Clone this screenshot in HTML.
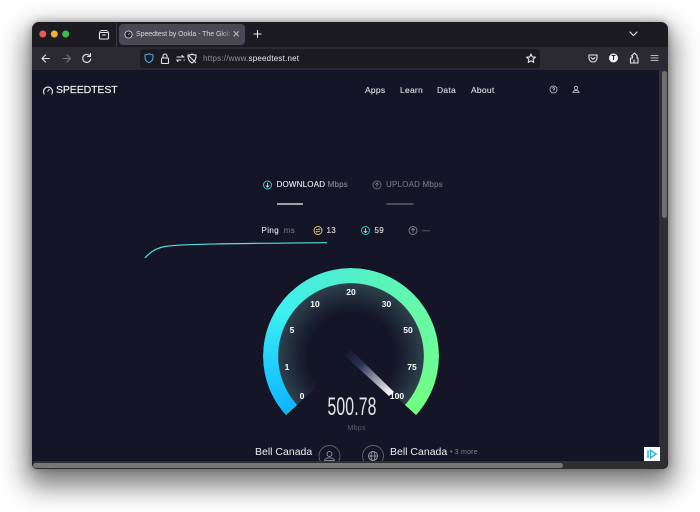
<!DOCTYPE html>
<html><head><meta charset="utf-8"><style>
*{box-sizing:border-box;margin:0;padding:0}
html,body{width:700px;height:512px;overflow:hidden;background:#fff;font-family:"Liberation Sans",sans-serif}
.a{position:absolute;white-space:nowrap}
#win{position:absolute;left:32px;top:22px;width:636px;height:447px;border-radius:7px 7px 5px 5px;background:#1c1b22;box-shadow:0 12px 26px 6px rgba(0,0,0,.5),0 0 8px rgba(0,0,0,.3)}
svg{position:absolute;overflow:visible}
.ico{fill:none;stroke:#e4e4e8;stroke-width:1.1;stroke-linecap:round;stroke-linejoin:round}
.t{color:#e6e7ea;font-size:8px;letter-spacing:.25px;-webkit-text-stroke:.1px currentColor}
.l{color:#e0e1e5;font-size:8.5px;letter-spacing:.25px;top:85px;-webkit-text-stroke:.08px currentColor}
.g{position:absolute;color:#fff;font-size:8.5px;font-weight:bold;transform:translate(-50%,-50%)}
</style></head><body>
<div id="win"></div>
<!-- toolbar -->
<div class="a" style="left:32px;top:47px;width:636px;height:23px;background:#2b2a33"></div>
<div class="a" style="left:140px;top:49px;width:400px;height:19px;background:#1c1b22;border-radius:3px"></div>
<!-- tab -->
<div class="a" style="left:116px;top:23px;width:1px;height:24px;background:#3a3a42"></div>
<div class="a" style="left:119px;top:24px;width:126px;height:21px;background:#4a4953;border-radius:4px"></div>
<svg style="left:0;top:0" width="700" height="512">
 <circle cx="42.800" cy="34" r="3.500" fill="#ee5a52"/><circle cx="54.300" cy="34" r="3.500" fill="#eeb32f"/><circle cx="65.700" cy="34" r="3.500" fill="#35c04a"/>
 <g class="ico"><rect x="99.500" y="32.500" width="9" height="6.500" rx="1"/><path d="M101 30.500h6M100 32.500v-1M108 32.500v-1M102.500 35h3"/></g>
 <circle cx="128.500" cy="34.500" r="3.600" fill="#1c2030" stroke="#cfd0d8" stroke-width=".9"/><path d="M128.500 35l1-2" stroke="#ddd" stroke-width=".8"/>
 <g class="ico" stroke-width=".9"><path d="M234 31.500l4.500 4.500M238.500 31.500L234 36" stroke="#b9b9c0"/><path d="M257.500 30.500v7M254 34h7"/></g>
 <path class="ico" d="M630 32l3.500 3.500 3.500-3.500" stroke="#cfcfd6"/>
 <!-- toolbar icons -->
 <g class="ico" stroke-width="1.200"><path d="M49.500 58.500h-7M45.500 55l-3.500 3.500 3.500 3.500"/><path d="M89.500 55.500a4 4 0 1 0 1.200 3.500M90.500 53.500v3h-3"/></g>
 <path class="ico" style="stroke:#75757c" d="M63 58.500h7M67 55l3.500 3.500L67 62"/>
 <path class="ico" style="stroke:#4aa8d8" d="M149 54.500c1.500 0 3-.5 4-1 1 .5 2.500 1 4 1v3c0 2.500-2 4-4 5-2-1-4-2.500-4-5z" transform="translate(-4 .3)"/>
 <g class="ico"><rect x="161.500" y="58" width="7" height="5.500" rx=".8"/><path d="M163 58v-2a2 2 0 0 1 4 0v2"/></g>
 <g class="ico" stroke-width=".9"><path d="M177 57h7M182 55.500l1.500 1.500M177 60h4M184 60h.5M178 61.500L176.800 60"/><path d="M188 55c1.500.2 3-.3 4-1 1.500.9 2.500 1.100 4 1 .3 3.500-1 6.200-4 8-3-1.800-4.300-4.500-4-8zM188.500 55.500l7 7"/></g>
 <path class="ico" d="M531 54l1.300 2.900 3.100.3-2.300 2.100.7 3.100-2.800-1.600-2.800 1.600.7-3.100-2.300-2.100 3.100-.3z"/>
 <path class="ico" d="M589 55h8v3a4 4 0 0 1-8 0zM591 57.500l2 1.800 2-1.800"/>
 <circle cx="613.500" cy="58" r="4.500" fill="#f4f4f6"/>
 <g class="ico"><path d="M630.500 58h2v-2l-1 0 3-3 2.500 2.500v2.500h1v5h-7.500zM634 63v-3"/></g>
 <path class="ico" stroke-width="1.200" style="stroke:#b8b8be" d="M651 55.500h7M651 58h7M651 60.500h7"/>
</svg>
<div class="a" style="left:136px;top:30px;width:95px;overflow:hidden;font-size:7px;color:#d6d6dc;letter-spacing:-.05px;line-height:9px;-webkit-mask:linear-gradient(90deg,#000 90%,transparent)">Speedtest by Ookla - The Global</div>
<div class="a" style="left:203px;top:53.500px;font-size:8px;letter-spacing:.2px;line-height:10px;color:#8f8f98">https://www.<span style="color:#e8e8ec">speedtest.net</span></div>
<div class="a" style="left:609px;top:54.500px;width:9px;text-align:center;font-size:7px;font-weight:bold;color:#1c1b22;line-height:7px">T</div>
<!-- page -->
<div class="a" style="left:32px;top:70px;width:627px;height:391px;background:#141526;overflow:hidden" id="p"></div>
<div class="a" style="left:659px;top:70px;width:9px;height:391px;background:#2f2f31"></div>
<div class="a" style="left:661.500px;top:71px;width:5px;height:147px;border-radius:3px;background:#6f6f71"></div>
<div class="a" style="left:33px;top:461px;width:634px;height:7.500px;background:#2f2f31;border-radius:0 0 5px 5px"></div>
<div class="a" style="left:33px;top:462.500px;width:530px;height:5px;border-radius:3px;background:#777"></div>
<!-- header -->
<svg style="left:0;top:0" width="700" height="512">
 <path d="M44.200 94a4.500 4.500 0 1 1 7.600 0" fill="none" stroke="#f2f2f4" stroke-width="1.100" stroke-linecap="round"/>
 <path d="M47.500 91.500l2-2.500" stroke="#f2f2f4" stroke-width="1"/>
 <g fill="none" stroke="#c8c9cf" stroke-width=".8"><circle cx="553.500" cy="89.500" r="3.500"/><path d="M552.400 88.500a1.100 1.100 0 1 1 1.100 1.300v.6M553.500 91.300v.2"/>
 <circle cx="576" cy="88" r="1.700"/><path d="M572.800 92.500c.4-2.600 6-2.600 6.400 0z"/></g>
 <!-- tabs icons -->
 <g fill="none" stroke-width="1"><circle cx="267.500" cy="185" r="4" stroke="#3ec3c8"/><path d="M267.500 182.800v4.200M265.700 185.400l1.800 1.800 1.800-1.800" stroke="#d0e6e8" stroke-width=".8"/>
 <circle cx="377" cy="185" r="4" stroke="#686a77"/><path d="M377 187.200V183M375.200 184.600l1.800-1.800 1.800 1.800" stroke="#7e808c" stroke-width=".8"/>
 <circle cx="318" cy="230.500" r="4" stroke="#e2c969"/><path d="M316 229.500h3.800l-1-1M320 231.500h-3.800l1 1" stroke="#e2c969" stroke-width=".8"/>
 <circle cx="365.500" cy="230.500" r="4" stroke="#3ec3c8"/><path d="M365.500 228.300v4.200M363.700 230.900l1.800 1.800 1.800-1.800" stroke="#d0e6e8" stroke-width=".8"/>
 <circle cx="413" cy="230.500" r="4" stroke="#777986"/><path d="M413 232.700v-4.200M411.200 230.100l1.800-1.800 1.800 1.800" stroke="#8d8f9b" stroke-width=".8"/>
 <circle cx="340" cy="429" r="3.500" stroke="#2f8f98"/><path d="M340 427v3.800M338.500 429.400l1.500 1.500 1.500-1.500" stroke="#2f8f98" stroke-width=".8"/>
 </g>
 <path d="M277 204h26" stroke="#f2f2f4" stroke-width="1.200"/>
 <path d="M386.500 204h27" stroke="#6d6e7b" stroke-width="1.200"/>
 <path d="M145 258C150 252 156 248 165 246.500C180 244 230 243.500 327 242.700" fill="none" stroke="#5cdcdc" stroke-width="1.200"/>
</svg>
<div class="a" style="left:56px;top:84px;font-size:10.500px;line-height:12px;color:#f2f2f4;letter-spacing:-.1px;-webkit-text-stroke:.15px #f2f2f4">SPEEDTEST</div>
<div class="a l" style="left:365px">Apps</div><div class="a l" style="left:400px">Learn</div><div class="a l" style="left:437px">Data</div><div class="a l" style="left:471px">About</div>
<div class="a t" style="left:276.500px;top:180px;color:#eeeef0;letter-spacing:.2px">DOWNLOAD <span style="color:#8c8d99">Mbps</span></div>
<div class="a t" style="left:386px;top:180px;color:#777985;letter-spacing:.2px">UPLOAD Mbps</div>
<div class="a t" style="left:261.500px;top:226px;letter-spacing:.4px">Ping <span style="color:#777985;margin-left:2px">ms</span></div>
<div class="a t" style="left:326.500px;top:226px">13</div>
<div class="a t" style="left:374.500px;top:226px">59</div>
<div class="a t" style="left:422px;top:226px;color:#777985">—</div>
<!-- gauge -->
<div class="a" style="left:263px;top:268px;width:176px;height:176px;border-radius:50%;background:conic-gradient(from -132deg,#10b4ff 0deg,#20cfff 35deg,#3ff0f0 75deg,#50f0c8 132deg,#68f8a8 190deg,#70ff80 264deg,#70ff80 360deg);-webkit-mask:radial-gradient(circle,transparent 72.500px,#000 73px,#000 88px,transparent 88.500px)"></div>
<div class="a" style="left:278px;top:283px;width:146px;height:146px;border-radius:50%;background:radial-gradient(circle,transparent 42px,rgba(80,130,130,.08) 50px,rgba(85,130,135,.4) 73px)"></div>
<svg style="left:0;top:0" width="700" height="512">
 <defs><linearGradient id="n" gradientUnits="userSpaceOnUse" x1="348" y1="352" x2="392" y2="394"><stop offset="0" stop-color="#1d2540" stop-opacity=".5"/><stop offset=".3" stop-color="#2c3350"/><stop offset=".6" stop-color="#8c8ea0"/><stop offset="1" stop-color="#fff"/></linearGradient></defs>
 <path d="M351 356L286.500 414.500L262 450H440L415.500 414.500Z" fill="#141526"/>
 <path d="M345 356L351 350L394 392L389 396Z" fill="url(#n)"/>
</svg>
<div class="g" style="left:302px;top:396px">0</div>
<div class="g" style="left:287px;top:367px">1</div>
<div class="g" style="left:292px;top:330px">5</div>
<div class="g" style="left:315px;top:304px">10</div>
<div class="g" style="left:351px;top:291.500px">20</div>
<div class="g" style="left:386.500px;top:304px">30</div>
<div class="g" style="left:408px;top:330px">50</div>
<div class="g" style="left:412px;top:367px">75</div>
<div class="g" style="left:397px;top:396px">100</div>
<div class="a" style="left:351.500px;top:394.500px;font-size:25px;line-height:25px;color:#e4e6ea;transform:translateX(-50%) scaleX(.63);letter-spacing:.2px">500.78</div>
<div class="a" style="left:347.500px;top:425px;font-size:7px;line-height:8px;color:#5d5f6d;letter-spacing:.3px">Mbps</div>
<!-- servers -->
<div class="a" style="left:255px;top:446px;font-size:10.500px;line-height:12px;color:#eceef0">Bell Canada</div>
<div class="a" style="left:390px;top:446px;font-size:10.500px;line-height:12px;color:#eceef0">Bell Canada</div>
<div class="a" style="left:450px;top:449px;font-size:7px;line-height:8px;color:#7d7f8b;letter-spacing:.2px">• 3 more</div>
<svg style="left:0;top:0;overflow:hidden" width="700" height="461" viewBox="0 0 700 461">
 <g fill="none" stroke="#5f616e" stroke-width=".9"><circle cx="329.500" cy="456" r="10.500"/><circle cx="373" cy="456" r="10.500"/></g>
 <g fill="none" stroke="#a6a8b2" stroke-width=".8"><circle cx="329.500" cy="454" r="2.500"/><path d="M324.500 460.500c.5-3.500 9.500-3.500 10 0z"/><circle cx="373" cy="456" r="4.500"/><ellipse cx="373" cy="456" rx="2" ry="4.500"/><path d="M368.500 456h9"/></g>
</svg>
<!-- ad badge -->
<div class="a" style="left:644px;top:447px;width:16px;height:14px;background:#fff"></div>
<svg style="left:644px;top:447px" width="16" height="14"><path d="M4 3v8" stroke="#26b8d8" stroke-width="1.500"/><path d="M6.500 3.200L12 7l-5.500 3.800z" fill="none" stroke="#26b8d8" stroke-width="1.500"/></svg>
</body></html>
